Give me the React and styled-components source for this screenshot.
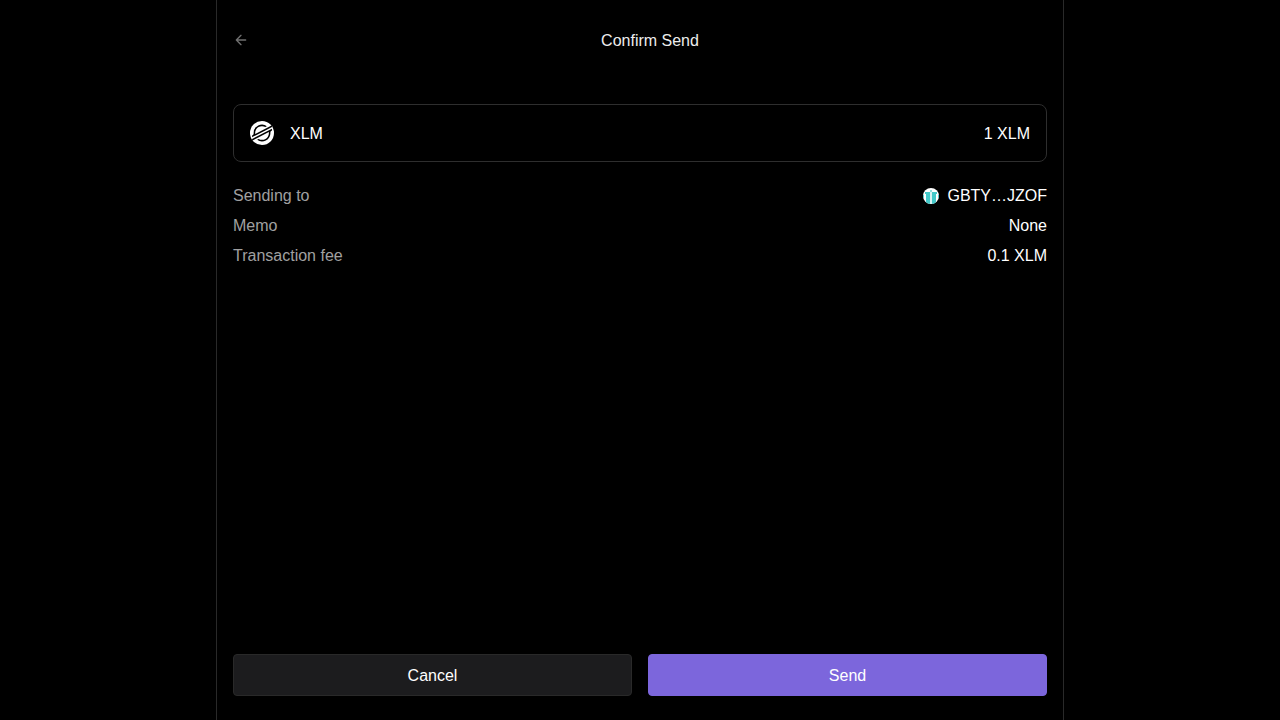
import React from "react";
import styled, { createGlobalStyle } from "styled-components";

const GlobalStyle = createGlobalStyle`
  *, *::before, *::after { box-sizing: border-box; }
  body {
    margin: 0;
    background: #000;
    color: #fff;
    font: 16px/22px "Liberation Sans", Arial, Helvetica, sans-serif;
  }
`;

const Page = styled.main`
  display: flex;
  flex-direction: column;
  width: 100%;
  max-width: 848px;
  min-height: 100vh;
  margin: 0 auto;
  padding: 24px 16px;
  border: solid #292929;
  border-width: 0 1px;
`;

const Header = styled.header`
  display: flex;
  align-items: center;
  gap: 4px;
  height: 32px;
  margin-bottom: 48px;
`;

const BackButton = styled.button`
  display: flex;
  padding: 0;
  border: 0;
  background: none;
  color: #707070;
  cursor: pointer;
`;

const Title = styled.h1`
  flex: 1;
  margin: 0;
  padding-top: 2px;
  color: #ededed;
  font-size: 16px;
  font-weight: 400;
  text-align: center;
`;

const AssetCard = styled.section`
  display: flex;
  align-items: center;
  gap: 16px;
  height: 58px;
  padding: 0 16px;
  border: 1px solid #2e2e2e;
  border-radius: 8px;
`;

const AssetName = styled.span`
  flex: 1;
  padding-top: 2px;
`;

const AssetAmount = styled.span`
  padding-top: 2px;
`;

const Details = styled.dl`
  display: flex;
  flex-direction: column;
  gap: 8px;
  margin: 0;
  padding-top: 23px;
`;

const DetailRow = styled.div`
  display: flex;
  justify-content: space-between;
`;

const DetailLabel = styled.dt`
  color: #a0a0a0;
`;

const DetailValue = styled.dd`
  display: flex;
  align-items: center;
  gap: 8px;
  margin: 0;
`;

const Actions = styled.footer`
  display: grid;
  grid-template-columns: 1fr 1fr;
  gap: 16px;
  margin-top: auto;
`;

const ActionButton = styled.button`
  height: 42px;
  padding: 2px 16px 0;
  border: 1px solid ${(p) => (p.$primary ? "#7c66dc" : "#292929")};
  border-radius: 4px;
  background: ${(p) => (p.$primary ? "#7c66dc" : "#1c1c1e")};
  color: #fff;
  font: inherit;
  cursor: pointer;
`;

const ArrowLeftIcon = () => (
  <svg width="16" height="16" viewBox="0 0 24 24" fill="none" stroke="currentColor" strokeWidth="2" strokeLinecap="round" strokeLinejoin="round" aria-hidden="true">
    <path d="M19 12H5M12 19l-7-7 7-7" />
  </svg>
);

const StellarLogo = () => (
  <svg width="24" height="24" viewBox="0 0 24 24" aria-hidden="true">
    <circle cx="12" cy="12" r="12" fill="#fff" />
    <g transform="translate(2.1 3.6) scale(0.084)" fill="#000">
      <path d="M203 26.16l-28.46 14.5-137.43 70a82.49 82.49 0 0 1-.7-10.69A81.87 81.87 0 0 1 158.2 28.6l16.29-8.3 2.43-1.24A100 100 0 0 0 18.18 100q0 3.82.29 7.61a18.19 18.19 0 0 1-9.88 17.58L0 129.57V150l25.29-12.89 8.19-4.18 8.07-4.11L186.43 55l16.28-8.29 33.65-17.15V9.14z" />
      <path d="M236.36 50L49.78 145 33.5 153.31 0 170.38v20.41l33.27-16.95 28.46-14.5L199.3 89.24A83.45 83.45 0 0 1 200 100 81.87 81.87 0 0 1 78.09 171.36l-1 .53-17.66 9A100 100 0 0 0 218.18 100c0-2.57-.1-5.14-.29-7.68a18.2 18.2 0 0 1 9.87-17.58l8.6-4.38z" />
    </g>
  </svg>
);

const Identicon = () => (
  <svg width="16" height="16" viewBox="0 0 16 16" aria-hidden="true">
    <clipPath id="identicon-circle"><circle cx="8" cy="8" r="8" /></clipPath>
    <g clipPath="url(#identicon-circle)">
      <path fill="#fff" d="M0 0h16v16H0z" />
      <path fill="#44c9c9" d="M2 4h5v2H2zM9 4h5v2H9zM3 6h4v10H3zM9 6h4v10H9zM0 7h1v3H0zM15 7h1v3h-1z" />
      <path fill="#8edfdf" d="M7 2h2v2H7z" />
      <path fill="#d8f4f4" d="M7 4h2v12H7z" />
    </g>
  </svg>
);

const details = [
  { label: "Sending to", value: "GBTY…JZOF", icon: <Identicon /> },
  { label: "Memo", value: "None" },
  { label: "Transaction fee", value: "0.1 XLM" },
];

export default function App() {
  return (
    <>
      <GlobalStyle />
      <Page>
        <Header>
          <BackButton type="button" aria-label="Back"><ArrowLeftIcon /></BackButton>
          <Title>Confirm Send</Title>
        </Header>
        <AssetCard>
          <StellarLogo />
          <AssetName>XLM</AssetName>
          <AssetAmount>1 XLM</AssetAmount>
        </AssetCard>
        <Details>
          {details.map(({ label, value, icon }) => (
            <DetailRow key={label}>
              <DetailLabel>{label}</DetailLabel>
              <DetailValue>{icon}<span>{value}</span></DetailValue>
            </DetailRow>
          ))}
        </Details>
        <Actions>
          <ActionButton type="button">Cancel</ActionButton>
          <ActionButton type="button" $primary>Send</ActionButton>
        </Actions>
      </Page>
    </>
  );
}
